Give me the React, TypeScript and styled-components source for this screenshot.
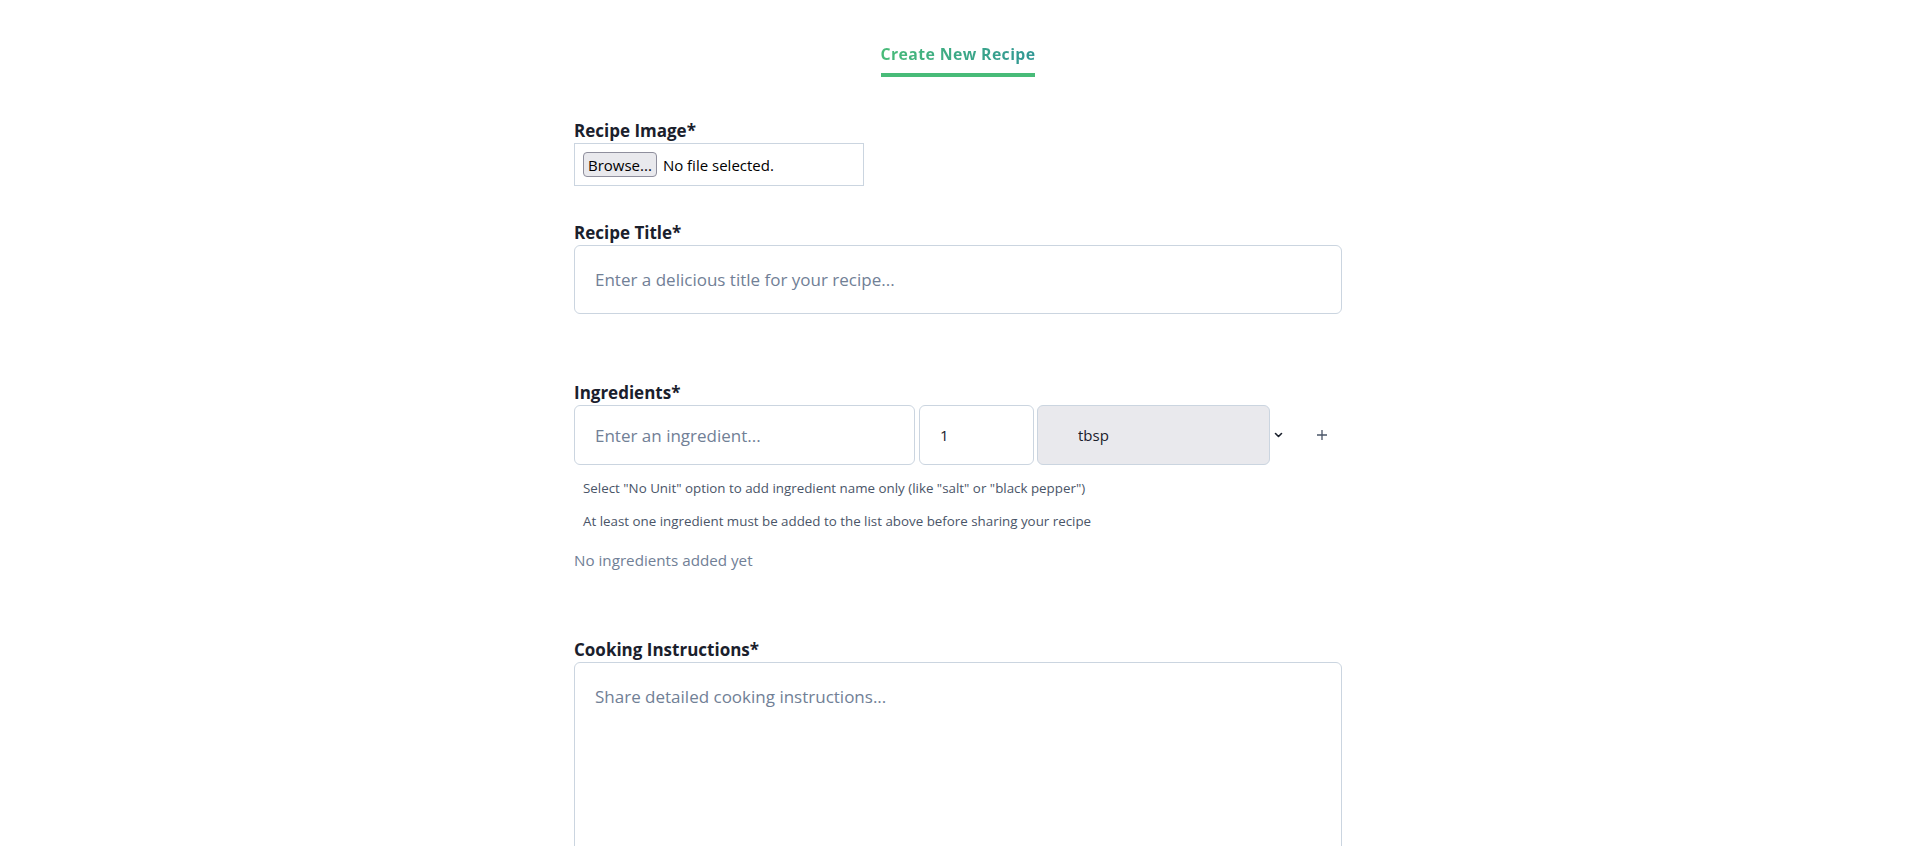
import { useState } from 'react';
import styled, { createGlobalStyle } from 'styled-components';

const GlobalStyle = createGlobalStyle`
  body {
    margin: 0;
    background: #ffffff;
    font-family: 'Segoe UI', 'Open Sans', sans-serif;
    color: #1a202c;
  }
`;

const units = ['No Unit', 'tsp', 'tbsp', 'cup', 'g', 'kg', 'ml', 'l', 'pcs'];

const App = () => {
  const [title, setTitle] = useState<string>('');
  const [ingredient, setIngredient] = useState<string>('');
  const [quantity, setQuantity] = useState<string>('1');
  const [unit, setUnit] = useState<string>('tbsp');
  const [ingredients, setIngredients] = useState<string[]>([]);
  const [instructions, setInstructions] = useState<string>('');

  const handleAdd = () => {
    if (!ingredient.trim()) return;
    const text =
      unit === 'No Unit' ? ingredient : `${quantity} ${unit} ${ingredient}`;
    setIngredients([...ingredients, text]);
    setIngredient('');
  };

  return (
    <>
      <GlobalStyle />
      <Page>
        <Tabs>
          <Tab>Create New Recipe</Tab>
        </Tabs>

        <Form onSubmit={e => e.preventDefault()}>
          <Field>
            <Label>Recipe Image*</Label>
            <FileBox>
              <HiddenInput type='file' accept='image/*' />
              <BrowseButton>Browse...</BrowseButton>
              <FileName>No file selected.</FileName>
            </FileBox>
          </Field>

          <Field $gap={35}>
            <Label>Recipe Title*</Label>
            <TextInput
              value={title}
              onChange={e => setTitle(e.target.value)}
              placeholder='Enter a delicious title for your recipe...'
            />
          </Field>

          <Field $gap={67}>
            <Label>Ingredients*</Label>
            <IngredientRow>
              <IngredientInput
                value={ingredient}
                onChange={e => setIngredient(e.target.value)}
                placeholder='Enter an ingredient...'
              />
              <QtyInput
                value={quantity}
                onChange={e => setQuantity(e.target.value)}
              />
              <UnitSelect value={unit} onChange={e => setUnit(e.target.value)}>
                {units.map(u => (
                  <option key={u} value={u}>
                    {u}
                  </option>
                ))}
              </UnitSelect>
              <Chevron width='9' height='6' viewBox='0 0 9 6'>
                <polyline
                  points='1.5,1.5 4.5,4.5 7.5,1.5'
                  fill='none'
                  stroke='#1a202c'
                  strokeWidth='1.6'
                  strokeLinecap='round'
                  strokeLinejoin='round'
                />
              </Chevron>
              <AddButton type='button' onClick={handleAdd}>
                <svg width='12' height='12' viewBox='0 0 12 12'>
                  <path
                    d='M6 1v10M1 6h10'
                    stroke='#4a5568'
                    strokeWidth='1.3'
                    fill='none'
                  />
                </svg>
              </AddButton>
            </IngredientRow>
            <Hint $top={13}>
              Select "No Unit" option to add ingredient name only (like "salt" or
              "black pepper")
            </Hint>
            <Hint $top={13}>
              At least one ingredient must be added to the list above before
              sharing your recipe
            </Hint>
            {ingredients.length === 0 ? (
              <Empty>No ingredients added yet</Empty>
            ) : (
              <List>
                {ingredients.map((item, index) => (
                  <li key={index}>{item}</li>
                ))}
              </List>
            )}
          </Field>

          <Field $gap={66}>
            <Label>Cooking Instructions*</Label>
            <TextArea
              value={instructions}
              onChange={e => setInstructions(e.target.value)}
              placeholder='Share detailed cooking instructions...'
            />
          </Field>
        </Form>
      </Page>
    </>
  );
};

const Page = styled.div`
  max-width: 768px;
  margin: 0 auto;
  padding: 43px 0 60px;
`;

const Tabs = styled.nav`
  display: flex;
  justify-content: center;
`;

const Tab = styled.button`
  background: none;
  border: none;
  border-bottom: 4px solid #48bb78;
  padding: 0 0 8px;
  font-family: inherit;
  font-size: 15.8px;
  line-height: 22px;
  font-weight: 700;
  letter-spacing: 0.025em;
  background-image: linear-gradient(90deg, #48bb78, #319795);
  -webkit-background-clip: text;
  background-clip: text;
  color: transparent;
  cursor: pointer;
`;

const Form = styled.form`
  display: flex;
  flex-direction: column;
  margin-top: 42px;
`;

const Field = styled.div<{ $gap?: number }>`
  display: flex;
  flex-direction: column;
  margin-top: ${p => p.$gap ?? 0}px;
`;

const Label = styled.label`
  font-size: 17px;
  line-height: 24px;
  font-weight: 700;
  color: #1a202c;
`;

const FileBox = styled.label`
  display: flex;
  align-items: center;
  gap: 6px;
  width: 290px;
  height: 43px;
  box-sizing: border-box;
  padding: 0 8px;
  border: 1px solid #cbd5e0;
  cursor: pointer;
`;

const HiddenInput = styled.input`
  display: none;
`;

const BrowseButton = styled.span`
  display: inline-flex;
  align-items: center;
  height: 25px;
  box-sizing: border-box;
  padding: 0 4px;
  background: #e9e9ed;
  border: 1px solid #8f8f9d;
  border-radius: 4px;
  font-size: 15px;
  color: #000000;
`;

const FileName = styled.span`
  font-size: 15px;
  color: #000000;
`;

const baseInput = `
  box-sizing: border-box;
  border: 1px solid #cbd5e0;
  border-radius: 6px;
  font-family: inherit;
  font-size: 17px;
  color: #1a202c;
  background: #ffffff;
  outline: none;

  &::placeholder {
    color: #718096;
  }
`;

const TextInput = styled.input`
  ${baseInput}
  width: 100%;
  height: 69px;
  padding: 0 20px;
`;

const IngredientRow = styled.div`
  display: flex;
  align-items: center;
  height: 60px;
`;

const IngredientInput = styled.input`
  ${baseInput}
  width: 341px;
  height: 60px;
  padding: 0 20px;
`;

const QtyInput = styled.input`
  ${baseInput}
  width: 115px;
  height: 60px;
  margin-left: 4px;
  padding: 0 20px;
  font-size: 15px;
`;

const UnitSelect = styled.select`
  ${baseInput}
  width: 233px;
  height: 60px;
  margin-left: 3px;
  padding: 0 0 0 40px;
  background: #e9e9ed;
  font-size: 15px;
  appearance: none;
  -webkit-appearance: none;
`;

const Chevron = styled.svg`
  margin-left: 4px;
`;

const AddButton = styled.button`
  display: flex;
  align-items: center;
  justify-content: center;
  width: 40px;
  height: 40px;
  margin-left: auto;
  background: none;
  border: none;
  cursor: pointer;
`;

const Hint = styled.p<{ $top: number }>`
  margin: ${p => p.$top}px 0 0 9px;
  font-size: 13.35px;
  line-height: 20px;
  color: #4a5568;
`;

const Empty = styled.p`
  margin: 17px 0 0;
  font-size: 15.2px;
  line-height: 24px;
  color: #718096;
`;

const List = styled.ul`
  margin: 17px 0 0;
  padding-left: 20px;
  font-size: 16px;
  color: #1a202c;
`;

const TextArea = styled.textarea`
  ${baseInput}
  width: 100%;
  height: 260px;
  padding: 22px 20px;
  line-height: 24px;
  resize: vertical;
`;

export default App;
